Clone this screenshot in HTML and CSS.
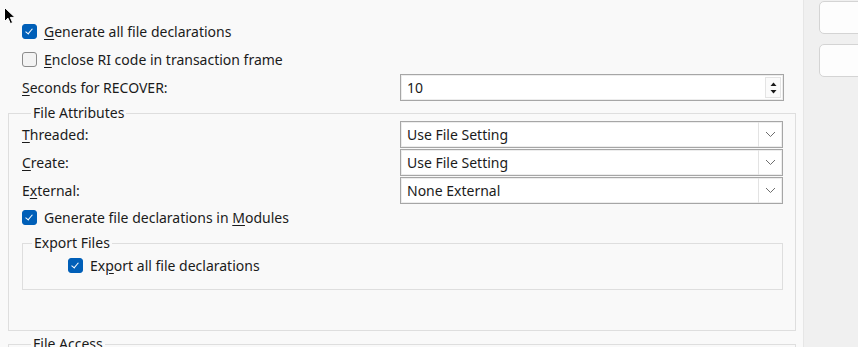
FILE: index.html
```html
<!DOCTYPE html>
<html lang="en">
<head>
    <meta charset="UTF-8">
    <title>File Options</title>
    <link rel="stylesheet" href="styles.css">
</head>
<body>
    <div class="window">
        <div class="main">
            <div class="top-options">
                <label class="check-row">
                    <span class="box checked"></span>
                    <span><u>G</u>enerate all file declarations</span>
                </label>
                <label class="check-row">
                    <span class="box"></span>
                    <span><u>E</u>nclose RI code in transaction frame</span>
                </label>
                <div class="field-row spin-row">
                    <span class="field-label"><u>S</u>econds for RECOVER:</span>
                    <div class="spinbox">
                        <span class="value">10</span>
                        <span class="spin-buttons">
                            <svg width="9" height="6" viewBox="0 0 9 6"><path d="M1.5 5 L4.5 1.5 L7.5 5 Z" fill="#1a1a1a"/></svg>
                            <svg width="9" height="6" viewBox="0 0 9 6"><path d="M1.5 1 L4.5 4.5 L7.5 1 Z" fill="#1a1a1a"/></svg>
                        </span>
                    </div>
                </div>
            </div>

            <fieldset class="group">
                <legend>File Attributes</legend>
                <div class="field-row">
                    <span class="field-label"><u>T</u>hreaded:</span>
                    <div class="combo">
                        <span class="value">Use File Setting</span>
                        <span class="drop"><svg width="11" height="7" viewBox="0 0 11 7"><path d="M1 1 L5.5 5.5 L10 1" fill="none" stroke="#6e6e6e" stroke-width="1"/></svg></span>
                    </div>
                </div>
                <div class="field-row">
                    <span class="field-label"><u>C</u>reate:</span>
                    <div class="combo">
                        <span class="value">Use File Setting</span>
                        <span class="drop"><svg width="11" height="7" viewBox="0 0 11 7"><path d="M1 1 L5.5 5.5 L10 1" fill="none" stroke="#6e6e6e" stroke-width="1"/></svg></span>
                    </div>
                </div>
                <div class="field-row">
                    <span class="field-label">E<u>x</u>ternal:</span>
                    <div class="combo">
                        <span class="value">None External</span>
                        <span class="drop"><svg width="11" height="7" viewBox="0 0 11 7"><path d="M1 1 L5.5 5.5 L10 1" fill="none" stroke="#6e6e6e" stroke-width="1"/></svg></span>
                    </div>
                </div>
                <label class="check-row modules-row">
                    <span class="box checked"></span>
                    <span>Generate file declarations in <u>M</u>odules</span>
                </label>

                <fieldset class="group inner">
                    <legend>Export Files</legend>
                    <label class="check-row export-row">
                        <span class="box checked"></span>
                        <span>Ex<u>p</u>ort all file declarations</span>
                    </label>
                </fieldset>
            </fieldset>

            <fieldset class="group access">
                <legend>File Access</legend>
            </fieldset>
        </div>

        <div class="side">
            <button type="button" class="side-btn"></button>
            <button type="button" class="side-btn"></button>
        </div>
    </div>

    <svg class="cursor" width="12" height="18" viewBox="0 0 12 18">
        <path d="M0.5 0.5 L0.5 14.5 L4 11.2 L6.4 16.6 L8.6 15.6 L6.3 10.4 L11 10.4 Z" fill="#000" stroke="#fff" stroke-width="1"/>
    </svg>
</body>
</html>
```

FILE: styles.css
```css
html, body {
    margin: 0;
    height: 347px;
    overflow: hidden;
}

body {
    font-family: "Noto Sans", "Open Sans", sans-serif;
    font-size: 14px;
    color: #1b1b1b;
    background: #f0f0f0;
    position: relative;
}

u {
    text-decoration-thickness: 1px;
    text-underline-offset: 2px;
}

.window {
    display: flex;
    height: 347px;
}

.main {
    width: 804px;
    flex-shrink: 0;
    background: #f9f9f9;
    border-right: 1px solid #e6e6e6;
    padding-top: 17px;
    box-sizing: border-box;
}

.top-options {
    padding-left: 22px;
}

.check-row {
    display: flex;
    align-items: center;
    gap: 7px;
    height: 28px;
    cursor: default;
}

.top-options .check-row + .check-row {
    height: 29px;
}

.box {
    width: 13px;
    height: 13px;
    border: 1px solid #8b8b8b;
    border-radius: 3px;
    background: #f3f3f3;
    flex-shrink: 0;
    position: relative;
}

.box.checked {
    background: #005fb8;
    border-color: #005fb8;
}

.box.checked::after {
    content: "";
    position: absolute;
    left: 4px;
    top: 2px;
    width: 3px;
    height: 6px;
    border: solid #fff;
    border-width: 0 1px 1px 0;
    transform: rotate(40deg);
}

.field-row {
    display: flex;
    align-items: center;
    height: 28px;
}

.spin-row {
    height: 27px;
}

.field-label {
    width: 378px;
    flex-shrink: 0;
}

.spinbox,
.combo {
    width: 384px;
    height: 27px;
    box-sizing: border-box;
    border: 1px solid #a6a6a6;
    background: #fff;
    display: flex;
    align-items: center;
    box-shadow: inset 0 0 0 1px #ededed;
}

.value {
    flex: 1;
    padding-left: 6px;
}

.spin-buttons {
    width: 16px;
    height: 21px;
    margin-right: 2px;
    display: flex;
    flex-direction: column;
    align-items: center;
    justify-content: center;
    gap: 2px;
    box-sizing: border-box;
    border: 1px solid #e4e4e4;
    background: #fbfbfb;
}

.drop {
    width: 23px;
    height: 25px;
    border-left: 1px solid #e3e3e3;
    display: flex;
    align-items: center;
    justify-content: center;
}

.group {
    margin: 4px 7px 0 8px;
    padding: 0 12px 0 13px;
    border: 1px solid #dedede;
    min-width: 0;
    height: 226px;
    box-sizing: border-box;
}

.group legend {
    padding: 0 2px;
    margin-left: 9px;
    line-height: 16px;
    margin-bottom: -1px;
}

.modules-row {
    height: 27px;
}

.group.inner {
    margin: 4px 0 0 0;
    padding: 0;
    height: 55px;
}

.export-row {
    padding-left: 45px;
    height: 30px;
}

.group.access {
    margin-top: 5px;
    height: 40px;
}

.side {
    flex: 1;
    padding-top: 1px;
    padding-left: 15px;
    overflow: hidden;
    display: flex;
    flex-direction: column;
    gap: 10px;
}

.side-btn {
    width: 90px;
    height: 33px;
    background: #fdfdfd;
    border: 1px solid #d4d4d4;
    border-radius: 5px;
    flex-shrink: 0;
}

.cursor {
    position: absolute;
    left: 4px;
    top: 7px;
}
```
